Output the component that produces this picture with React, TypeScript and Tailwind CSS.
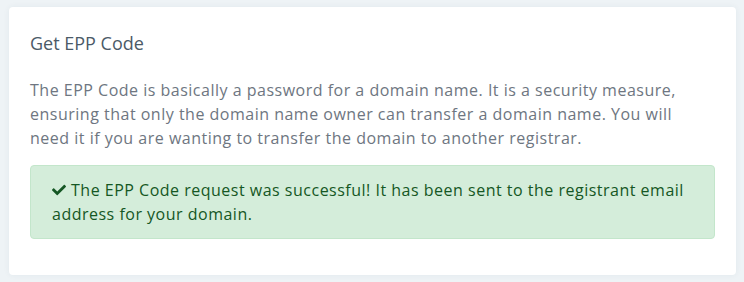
import { FaCheck } from "react-icons/fa";

export default function App() {
  return (
    <div
      className="min-h-[282px] w-[744px] bg-[#eef3f6] pt-[7px] pl-[9px] pr-[8px] pb-[8px]"
      style={{ fontFamily: '"Open Sans", sans-serif' }}
    >
      <div className="rounded-[4px] bg-white shadow-[0_0_6px_rgba(30,60,90,0.06)] px-[21px] pt-[25px] pb-[36px]">
        <h3 className="text-[18px] leading-[22px] text-[#4b5a67] font-normal">Get EPP Code</h3>
        <p className="mt-[24px] text-[16px] leading-[24px] tracking-[0.5px] text-[#6e7681]">
          The EPP Code is basically a password for a domain name. It is a security measure, ensuring that only the
          domain name owner can transfer a domain name. You will need it if you are wanting to transfer the domain to
          another registrar.
        </p>
        <div className="mt-[15px] rounded-[4px] border border-[#c3e6cb] bg-[#d4edda] pl-[21px] pr-[16px] py-[12px] text-[16px] leading-[24px] tracking-[0.5px] text-[#155724]">
          <FaCheck className="inline-block align-[-1px] text-[14px] mr-[5px]" />
          The EPP Code request was successful! It has been sent to the registrant email address for your domain.
        </div>
      </div>
    </div>
  );
}
